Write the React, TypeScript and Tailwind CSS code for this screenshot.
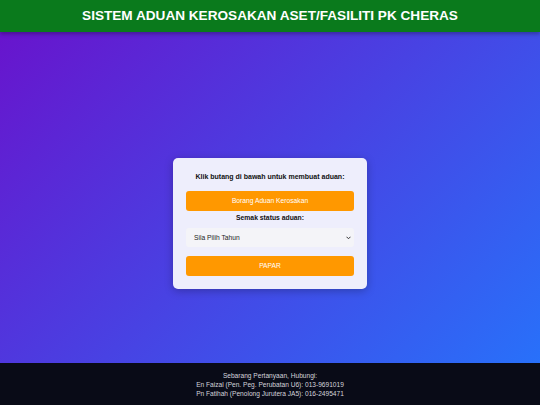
import React from "react";

export default function App() {
  return (
    <div
      className="h-[405px] w-full flex flex-col bg-[linear-gradient(135deg,#6a11cb_0%,#2575fc_100%)] overflow-hidden"
      style={{ fontFamily: '"Liberation Sans", Arial, sans-serif' }}
    >
      <header className="h-[32px] shrink-0 bg-[#0a7a1c] flex items-center justify-center shadow-[0_2px_4px_rgba(0,0,0,0.3)] relative z-10">
        <h1 className="text-white font-bold text-[13.6px] whitespace-nowrap">
          SISTEM ADUAN KEROSAKAN ASET/FASILITI PK CHERAS
        </h1>
      </header>
      <main className="flex-1 flex justify-center items-start pt-[126px]">
        <div className="w-[194px] bg-[#eeeefc] rounded-[5px] shadow-[0_2px_8px_rgba(0,0,0,0.25)] px-[13px] pt-[14px] pb-[13px] flex flex-col items-center">
          <p className="text-[7px] font-bold text-[#111] leading-[10px] whitespace-nowrap">
            Klik butang di bawah untuk membuat aduan:
          </p>
          <button className="mt-[9px] w-full h-[20px] bg-[#ff9800] rounded-[3px] text-white text-[6.7px] leading-[20px]">
            Borang Aduan Kerosakan
          </button>
          <p className="mt-[2px] text-[6.8px] font-bold text-[#111] leading-[10px] whitespace-nowrap">
            Semak status aduan:
          </p>
          <div className="mt-[5px] w-full h-[19px] bg-[#f4f4f8] rounded-[3px] relative">
            <select className="appearance-none block w-full h-[19px] py-0 leading-[19px] bg-transparent text-[6.7px] text-[#222] pl-[8px] pr-[12px] outline-none">
              <option>Sila Pilih Tahun</option>
            </select>
            <svg
              className="absolute right-[3px] top-[8px] pointer-events-none"
              width="5"
              height="4"
              viewBox="0 0 10 8"
            >
              <path d="M1 1.5 L5 5.5 L9 1.5" stroke="#333" strokeWidth="2" fill="none" />
            </svg>
          </div>
          <button className="mt-[9px] w-full h-[20px] bg-[#ff9800] rounded-[3px] text-white text-[6.7px] leading-[20px]">
            PAPAR
          </button>
        </div>
      </main>
      <footer className="h-[42px] shrink-0 bg-[#090b17] flex flex-col items-center justify-center text-[#d4d4dc] text-[6.6px] leading-[9px]">
        <p>Sebarang Pertanyaan, Hubungi:</p>
        <p>En Faizal (Pen. Peg. Perubatan U6): 013-9691019</p>
        <p>Pn Fatihah (Penolong Jurutera JA5): 016-2495471</p>
      </footer>
    </div>
  );
}
